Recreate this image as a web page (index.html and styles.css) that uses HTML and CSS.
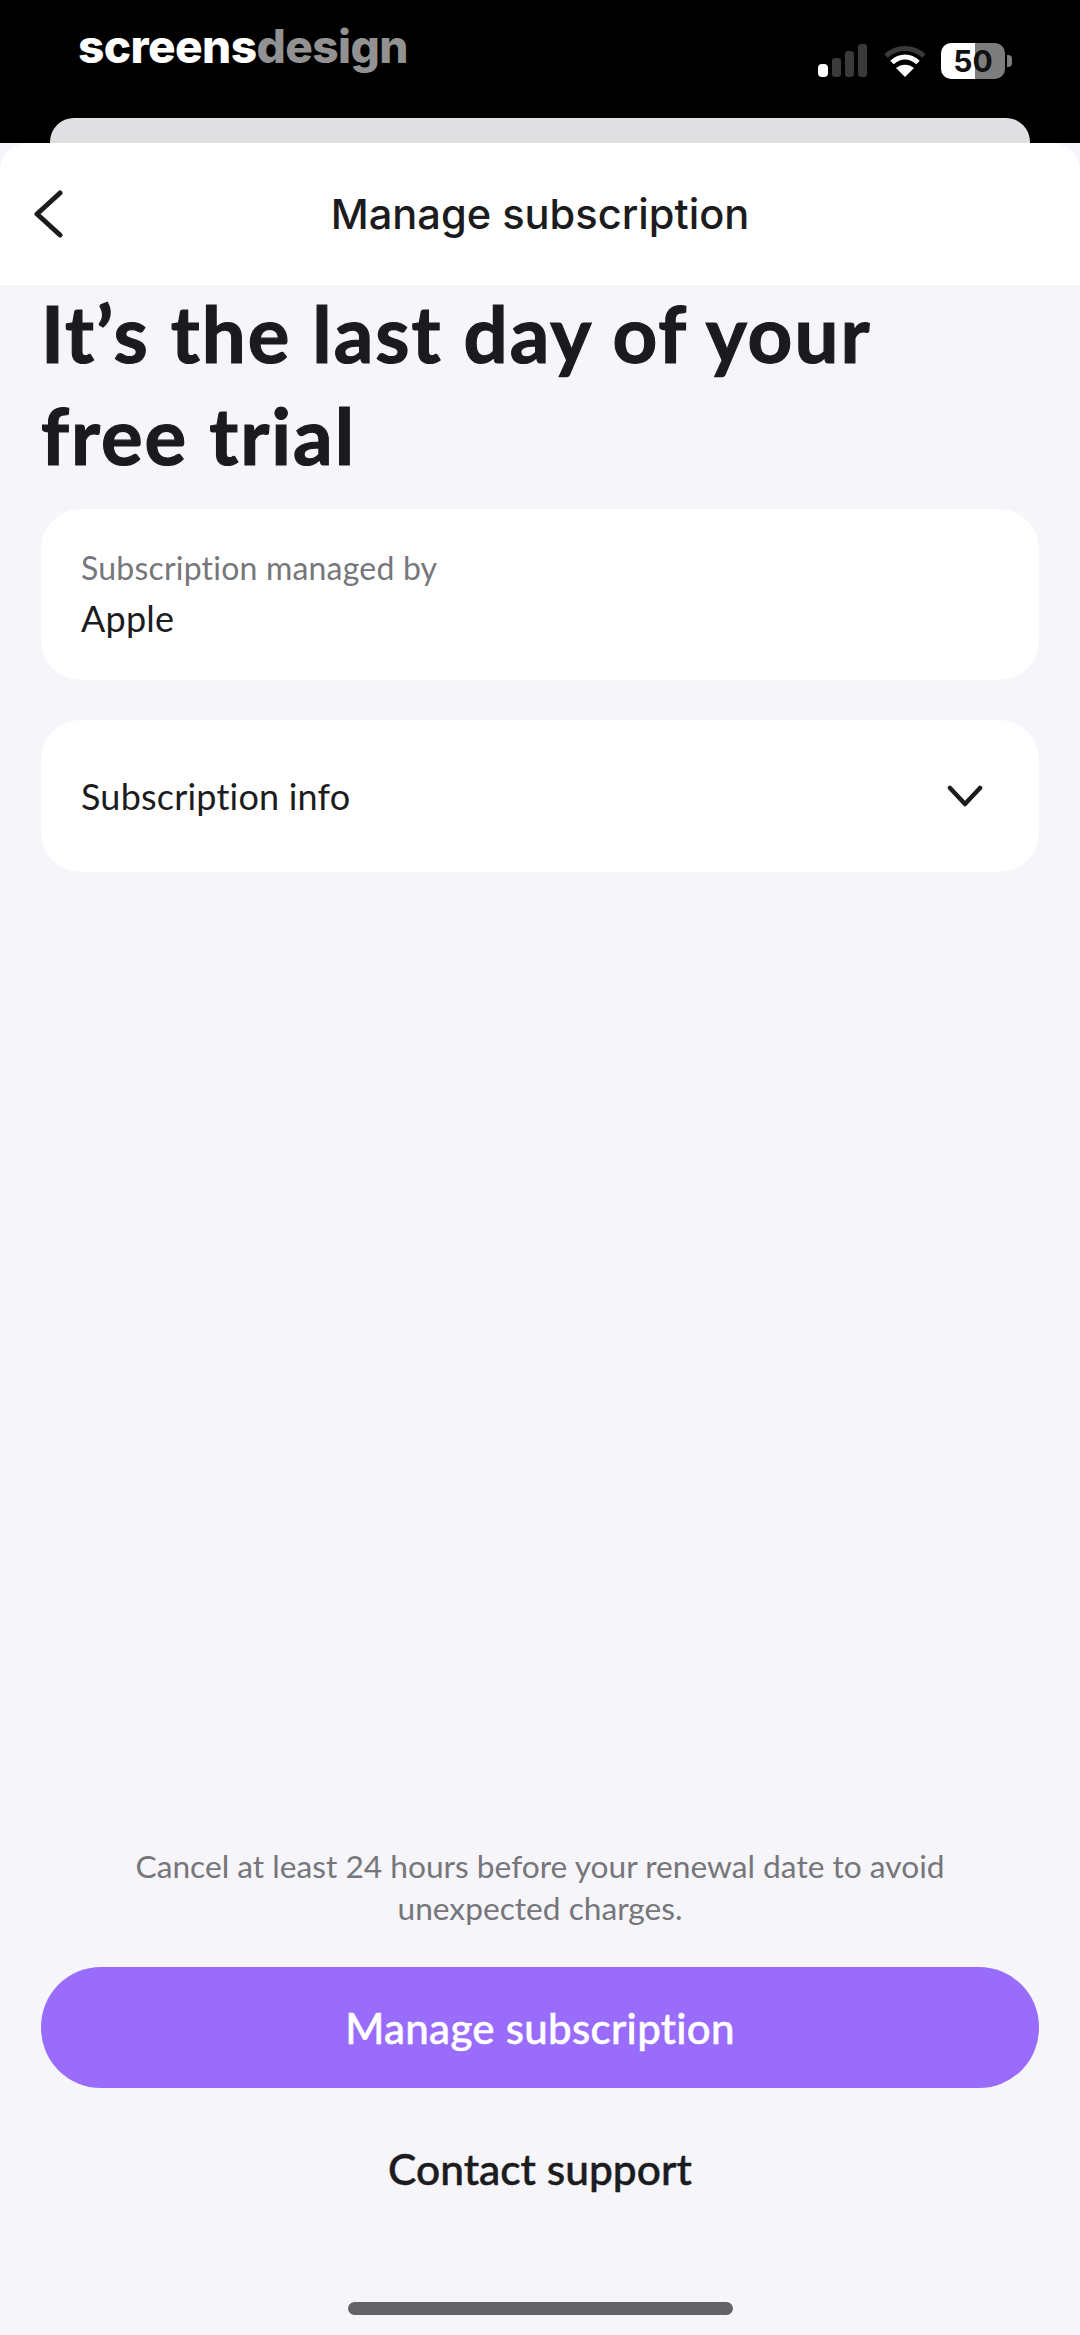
FILE: index.html
```html
<!DOCTYPE html>
<html lang="en">
<head>
  <meta charset="UTF-8">
  <title>Manage subscription</title>
  <link rel="stylesheet" href="styles.css">
</head>
<body>

  <!-- status bar -->
  <div class="status">
    <div class="logo">screens<span>design</span></div>
    <div class="status-icons">
      <svg class="signal" width="50" height="34" viewBox="0 0 50 34">
        <rect x="0" y="20" width="10" height="13" rx="4" fill="#fff"/>
        <rect x="14" y="14" width="9" height="19" rx="3" fill="#3a3a3a"/>
        <rect x="27" y="7" width="9" height="26" rx="3" fill="#3a3a3a"/>
        <rect x="40" y="0" width="9" height="33" rx="3" fill="#3a3a3a"/>
      </svg>
      <svg class="wifi" width="42" height="33" viewBox="0 0 42 33">
        <path d="M2 11 C13 1 29 1 40 11" fill="none" stroke="#3a3a3a" stroke-width="5"/>
        <path d="M8 17.500 C16 10 26 10 34 17.500" fill="none" stroke="#fff" stroke-width="5"/>
        <path d="M21 32 L12 23 C17 18.500 25 18.500 30 23 Z" fill="#fff"/>
      </svg>
      <div class="battery"><span class="battery-num">50</span></div>
      <div class="battery-nub"></div>
    </div>
  </div>

  <div class="sheet-behind"></div>

  <div class="navbar">
    <svg class="back" width="30" height="48" viewBox="0 0 30 48">
      <path d="M27 3 L4 24 L27 45" fill="none" stroke="#1c1c1e" stroke-width="5" stroke-linecap="round" stroke-linejoin="round"/>
    </svg>
    <div class="navbar-title">Manage subscription</div>
  </div>

  <div class="content">
    <h1>It’s the last day of your free trial</h1>

    <div class="card card-managed">
      <div class="card-label">Subscription managed by</div>
      <div class="card-value">Apple</div>
    </div>

    <div class="card card-info">
      <div class="card-value">Subscription info</div>
      <svg width="36" height="22" viewBox="0 0 36 22">
        <path d="M3 3 L18 19 L33 3" fill="none" stroke="#1c1c1e" stroke-width="4.500" stroke-linecap="round" stroke-linejoin="round"/>
      </svg>
    </div>

    <div class="bottom">
      <p class="note">Cancel at least 24 hours before your renewal date to avoid unexpected charges.</p>
      <button class="btn-main">Manage subscription</button>
      <button class="btn-link">Contact support</button>
    </div>
  </div>

  <div class="home-bar"></div>

</body>
</html>
```

FILE: styles.css
```css
* {
  box-sizing: border-box;
}

html, body {
  height: 100%;
}

body {
  margin: 0;
  height: 2335px;
  display: flex;
  flex-direction: column;
  font-family: Lato, "Noto Sans", sans-serif;
  font-variant-ligatures: none;
  background: #f5f5fa;
  color: #1c1c1e;
  overflow: hidden;
}

.status {
  height: 118px;
  background: #000;
  display: flex;
  justify-content: space-between;
  align-items: flex-start;
  padding: 16px 68px 0 78px;
  box-shadow: 0 25px 0 #000;
}

.logo {
  font-family: Inter, "Liberation Sans", sans-serif;
  font-weight: 800;
  font-size: 46px;
  line-height: 60px;
  letter-spacing: -0.6px;
  color: #fff;
}

.logo span {
  color: #929292;
}

.status-icons {
  display: flex;
  align-items: center;
  margin-top: 27px;
}

.wifi {
  margin-left: 16px;
}

.battery {
  width: 64px;
  height: 36px;
  margin-left: 15px;
  border-radius: 10px;
  background: linear-gradient(90deg, #fff 53%, #7d7d7d 53%);
  display: flex;
  align-items: center;
  justify-content: center;
}

.battery-num {
  font-family: Inter, sans-serif;
  font-weight: 700;
  font-size: 30px;
  color: #111;
}

.battery-nub {
  width: 5px;
  height: 12px;
  margin-left: 2px;
  border-radius: 0 4px 4px 0;
  background: #7d7d7d;
}

.sheet-behind {
  height: 25px;
  margin: 0 50px;
  background: #e0dfe2;
  border-radius: 24px 24px 0 0;
  position: relative;
}

.navbar {
  height: 142px;
  background: #fff;
  border-radius: 28px 28px 0 0;
  display: flex;
  align-items: center;
  justify-content: center;
  position: relative;
}

.back {
  position: absolute;
  left: 33px;
  top: 47px;
}

.navbar-title {
  font-family: Inter, sans-serif;
  font-weight: 500;
  font-size: 41.600px;
  color: #1c1c1e;
}

.content {
  flex: 1;
  display: flex;
  flex-direction: column;
  padding: 0 41px 0 41px;
}

h1 {
  margin: -3px 0 3px 0;
  font-size: 78px;
  line-height: 102px;
  font-weight: 700;
  color: #1a1a1f;
  letter-spacing: 2px;
  -webkit-text-stroke: 1.200px #1a1a1f;
  width: 900px;
}

.card {
  background: #fff;
  border-radius: 40px;
  padding: 0 40px;
}

.card-managed {
  height: 171px;
  margin-top: 20px;
  padding-top: 38px;
}

.card-info {
  height: 152px;
  margin-top: 40px;
  display: flex;
  align-items: center;
  justify-content: space-between;
  padding-right: 56px;
}

.card-label {
  font-size: 32px;
  line-height: 42px;
  letter-spacing: 0.2px;
  color: #76767b;
}

.card-managed .card-value {
  margin-top: 4px;
}

.card-value {
  font-size: 36px;
  line-height: 50px;
  letter-spacing: 0.2px;
  color: #1c1c1e;
}

.bottom {
  margin-top: auto;
  padding-bottom: 137px;
  text-align: center;
}

.note {
  margin: 0 auto 38px;
  width: 830px;
  font-size: 31.700px;
  line-height: 42px;
  color: #76767b;
}

.btn-main {
  display: block;
  width: 100%;
  height: 121px;
  border: none;
  border-radius: 60px;
  background: #996cfc;
  color: #fff;
  font-family: inherit;
  font-variant-ligatures: none;
  font-size: 42px;
  font-weight: 500;
  letter-spacing: 0.3px;
  -webkit-text-stroke: 0.500px #fff;
}

.btn-link {
  display: block;
  margin: 50px auto 0;
  padding: 0;
  height: 60px;
  border: none;
  background: none;
  color: #1c1c1e;
  font-family: inherit;
  font-variant-ligatures: none;
  font-size: 42.500px;
  font-weight: 500;
  -webkit-text-stroke: 0.500px #1c1c1e;
}

.home-bar {
  position: absolute;
  left: 348px;
  top: 2302px;
  width: 385px;
  height: 13px;
  border-radius: 7px;
  background: #636366;
}
```
